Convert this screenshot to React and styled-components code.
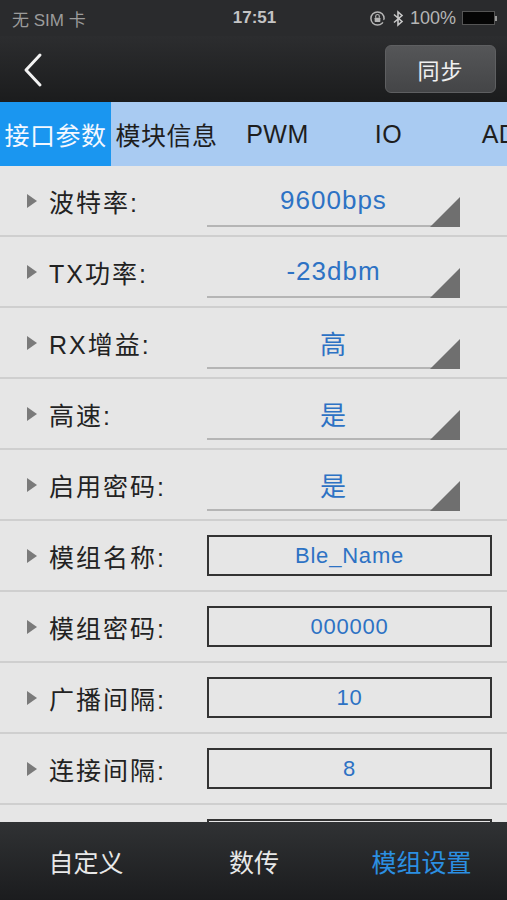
import React from "react";
import styled, { createGlobalStyle } from "styled-components";

const GlobalStyle = createGlobalStyle`
  html, body {
    margin: 0;
    padding: 0;
    background: #1c1d1f;
  }
  * { box-sizing: border-box; }
`;

const FONT = `"Liberation Sans", "Noto Sans CJK SC", sans-serif`;

const tabs = ["接口参数", "模块信息", "PWM", "IO", "AD"];

const rows = [
  { label: "波特率:", type: "select", value: "9600bps" },
  { label: "TX功率:", type: "select", value: "-23dbm" },
  { label: "RX增益:", type: "select", value: "高" },
  { label: "高速:", type: "select", value: "是" },
  { label: "启用密码:", type: "select", value: "是" },
  { label: "模组名称:", type: "input", value: "Ble_Name" },
  { label: "模组密码:", type: "input", value: "000000" },
  { label: "广播间隔:", type: "input", value: "10" },
  { label: "连接间隔:", type: "input", value: "8" },
  { label: "", type: "input", value: "" },
];

const App = () => {
  return (
    <Screen>
      <GlobalStyle />
      <StatusBar>
        <Carrier>无 SIM 卡</Carrier>
        <Clock>17:51</Clock>
        <StatusRight>
          <svg width="17" height="17" viewBox="0 0 16 16">
            <circle cx="8" cy="8" r="6.2" fill="none" stroke="#b5b5b5" strokeWidth="1.4" />
            <rect x="5.3" y="7.2" width="5.4" height="4" rx="0.6" fill="#b5b5b5" />
            <path d="M6.3 7.2 V5.9 a1.7 1.7 0 0 1 3.4 0 V7.2" fill="none" stroke="#b5b5b5" strokeWidth="1.1" />
            <path d="M12.5 10.5 l1.8 0.6 l0.2 -1.9" fill="none" stroke="#2a2b2d" strokeWidth="1.6" />
          </svg>
          <svg width="12" height="19" viewBox="0 0 12 18">
            <path d="M2 5 L10 12 L6 15.5 V2.5 L10 6 L2 13" fill="none" stroke="#c8c8c8" strokeWidth="1.6" />
          </svg>
          <Battery>100%</Battery>
          <BatteryIcon>
            <BatteryFill />
            <BatteryTip />
          </BatteryIcon>
        </StatusRight>
      </StatusBar>

      <NavBar>
        <BackButton>
          <svg width="22" height="36" viewBox="0 0 22 36">
            <path d="M18 3 L4 18 L18 33" fill="none" stroke="#f2f2f2" strokeWidth="3" strokeLinecap="round" strokeLinejoin="round" />
          </svg>
        </BackButton>
        <SyncButton>同步</SyncButton>
      </NavBar>

      <TabBar>
        {tabs.map((t, i) => (
          <Tab key={t} active={i === 0}>
            {t}
          </Tab>
        ))}
      </TabBar>

      <List>
        {rows.map((r, i) => (
          <Row key={i}>
            <Marker />
            <Label>{r.label}</Label>
            {r.type === "select" ? (
              <Select>
                <SelectValue>{r.value}</SelectValue>
                <Corner />
              </Select>
            ) : (
              <InputBox>{r.value}</InputBox>
            )}
          </Row>
        ))}
      </List>

      <BottomBar>
        <BottomItem>自定义</BottomItem>
        <BottomItem>数传</BottomItem>
        <BottomItem active>模组设置</BottomItem>
      </BottomBar>
    </Screen>
  );
};

export default App;

const Screen = styled.div`
  width: 507px;
  height: 900px;
  display: flex;
  flex-direction: column;
  overflow: hidden;
  font-family: ${FONT};
  background: #e6e6e6;
`;

const StatusBar = styled.div`
  height: 36px;
  flex-shrink: 0;
  display: grid;
  grid-template-columns: 1fr auto 1fr;
  align-items: center;
  padding: 0 10px 0 12px;
  background: #2a2b2d;
  color: #b0b0b0;
  font-size: 17px;
`;

const Carrier = styled.div`
  color: #9c9c9c;
`;

const Clock = styled.div`
  font-weight: bold;
  color: #c4c4c4;
  font-size: 17px;
`;

const StatusRight = styled.div`
  display: flex;
  justify-content: flex-end;
  align-items: center;
  gap: 6px;
`;

const Battery = styled.span`
  color: #b5b5b5;
  font-size: 18px;
`;

const BatteryIcon = styled.div`
  display: flex;
  align-items: center;
`;

const BatteryFill = styled.div`
  width: 33px;
  height: 14px;
  background: #050505;
  border: 1px solid #555;
`;

const BatteryTip = styled.div`
  width: 2px;
  height: 5px;
  background: #999;
`;

const NavBar = styled.div`
  height: 66px;
  flex-shrink: 0;
  display: flex;
  align-items: center;
  justify-content: space-between;
  padding: 0 11px 0 22px;
  background: linear-gradient(#2c2d2f, #1b1c1d);
`;

const BackButton = styled.div`
  display: flex;
  align-items: center;
  padding-top: 2px;
`;

const SyncButton = styled.div`
  width: 111px;
  height: 48px;
  border-radius: 6px;
  background: linear-gradient(#555658, #444547);
  border: 1px solid #5e5f61;
  color: #f0f0f0;
  font-size: 22px;
  letter-spacing: 1px;
  display: flex;
  align-items: center;
  justify-content: center;
`;

const TabBar = styled.div`
  height: 64px;
  flex-shrink: 0;
  display: flex;
  background: #a9cbf2;
  overflow: hidden;
`;

const Tab = styled.div`
  width: 111px;
  flex-shrink: 0;
  display: flex;
  align-items: center;
  justify-content: center;
  font-size: 25px;
  letter-spacing: 0.5px;
  white-space: nowrap;
  background: ${(p) => (p.active ? "#1a96f0" : "transparent")};
  color: ${(p) => (p.active ? "#f4f8ff" : "#1e1e1e")};
`;

const List = styled.div`
  flex: 1;
  overflow: hidden;
  background: #e6e6e6;
`;

const Row = styled.div`
  height: 71px;
  display: flex;
  align-items: center;
  border-bottom: 2px solid #cfcfcf;
  padding-left: 27px;
`;

const Marker = styled.div`
  width: 0;
  height: 0;
  border-top: 7px solid transparent;
  border-bottom: 7px solid transparent;
  border-left: 10px solid #7a7a7a;
  margin-right: 12px;
`;

const Label = styled.div`
  width: 158px;
  font-size: 25px;
  letter-spacing: 2px;
  color: #222;
  white-space: nowrap;
`;

const Select = styled.div`
  position: relative;
  width: 253px;
  height: 50px;
  margin-top: 2px;
  border-bottom: 2px solid #b5b5b5;
  display: flex;
  align-items: center;
  justify-content: center;
`;

const SelectValue = styled.div`
  font-size: 26px;
  letter-spacing: 1px;
  color: #2d72c4;
`;

const Corner = styled.div`
  position: absolute;
  right: 0;
  bottom: -2px;
  width: 0;
  height: 0;
  border-left: 30px solid transparent;
  border-bottom: 30px solid #6f6f6f;
`;

const InputBox = styled.div`
  width: 285px;
  height: 41px;
  border: 2px solid #333;
  display: flex;
  align-items: center;
  justify-content: center;
  font-size: 22px;
  letter-spacing: 0.8px;
  color: #2d72c4;
`;

const BottomBar = styled.div`
  height: 78px;
  flex-shrink: 0;
  display: grid;
  grid-template-columns: 172px 164px 171px;
  align-items: center;
  background: linear-gradient(#303234, #1b1c1e);
`;

const BottomItem = styled.div`
  text-align: center;
  font-size: 25px;
  color: ${(p) => (p.active ? "#2b8fe2" : "#e8e8e8")};
`;
